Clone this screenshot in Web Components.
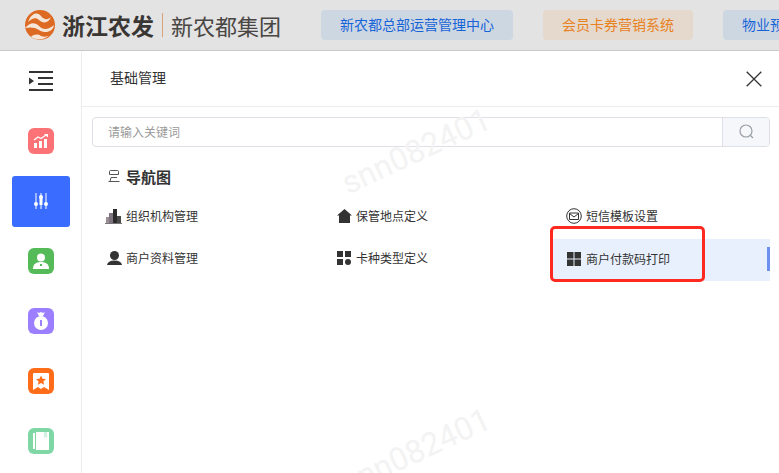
<!DOCTYPE html>
<html lang="zh">
<head>
<meta charset="utf-8">
<title>基础管理</title>
<style>
    html, body {
        margin: 0;
        padding: 0;
        height: 100%;
        background: #fff;
        overflow: hidden;
        font-family: "Liberation Sans", "Noto Sans CJK SC", sans-serif;
    }
</style>
</head>
<body>

<template id="app-shell-template">
    <style>
        :host { display: flex; flex-flow: column; width: 779px; height: 473px; position: relative; overflow: hidden; }
        .body { flex: 1; display: flex; min-height: 0; }
    </style>
    <slot name="header"></slot>
    <div class="body">
        <slot name="side"></slot>
        <slot></slot>
    </div>
    <slot name="overlay"></slot>
</template>

<template id="top-bar-template">
    <style>
        :host { display: flex; align-items: center; height: 50px; flex: none; background: #e3e3e3; border-bottom: 1px solid #c9c9c9; padding-left: 25px; overflow: hidden; box-sizing: content-box; }
        svg { width: 30px; height: 30px; flex: none; }
        .brand { font-size: 23px; font-weight: 700; color: #3a3634; margin-left: 7px; white-space: nowrap; letter-spacing: 0; }
        .rule { width: 1px; height: 24px; background: #d9a27a; margin: 0 8px; flex: none; }
        .sub { font-size: 22px; color: #4a4644; white-space: nowrap; font-weight: 400; }
        .tabs { display: flex; gap: 30px; margin-left: 40px; flex: none; }
    </style>
    <svg viewBox="0 0 30 30">
        <circle cx="15" cy="15" r="15" fill="#dd6a22"/>
        <path d="M3 12C7 2 13 2 16 6c3 4 7 4 10 1-2 6-8 7-12 3-3-3-7-2-11 2z" fill="#f5e6da"/>
        <path d="M0 18c5-6 10-6 14-2 4 4 9 4 15-1-1 7-9 9-15 5-4-3-9-3-14-2z" fill="#f5e6da"/>
        <path d="M6 27c3-3 7-3 10-1 3 1 6 1 8-1-4 5-12 6-18 2z" fill="#f5e6da"/>
    </svg>
    <span class="brand">浙江农发</span>
    <span class="rule"></span>
    <span class="sub">新农都集团</span>
    <div class="tabs"><slot></slot></div>
</template>

<template id="top-tab-template">
    <style>
        :host { display: block; flex: none; height: 30px; line-height: 30px; padding: 0 19px; border-radius: 4px; font-size: 14px; white-space: nowrap; background: #cdd7e2; color: #1764d8; }
        :host(.orange) { background: #e5d8cc; color: #e8821e; }
    </style>
    <slot></slot>
</template>

<template id="side-nav-template">
    <style>
        :host { display: flex; flex-flow: column; width: 81px; flex: none; border-right: 1px solid #ececec; box-sizing: content-box; }
    </style>
    <slot></slot>
</template>

<template id="side-item-template">
    <style>
        :host { display: flex; height: 60px; flex: none; align-items: center; justify-content: center; }
        .tile { width: 26px; height: 26px; border-radius: 6px; background: var(--tile, transparent); display: flex; align-items: center; justify-content: center; }
        :host(.active) .tile { width: 58px; height: 51px; border-radius: 3px; background: #3a6cff; }
        ::slotted(svg) { display: block; }
    </style>
    <div class="tile"><slot></slot></div>
</template>

<template id="work-panel-template">
    <style>
        :host { display: flex; flex-flow: column; flex: 1; min-width: 0; }
        .title { display: flex; align-items: center; justify-content: space-between; height: 56px; flex: none; box-sizing: border-box; border-bottom: 1px solid #ececec; padding: 0 17px 0 28px; font-size: 14px; color: #333; }
        .title span { margin-bottom: 4px; }
        svg { display: block; }
        .content { padding: 10px 9px 0 10px; }
        h3 { margin: 10px 0 0; box-sizing: border-box; display: flex; align-items: center; gap: 6px; height: 40px; padding: 0 0 2px 16px; font-size: 15px; font-weight: 700; color: #333; }
        .grid { display: grid; grid-template-columns: 230px 230px 218px; grid-auto-rows: 42px; }
    </style>
    <div class="title">
        <span>基础管理</span>
        <svg width="16" height="16" viewBox="0 0 16 16"><path d="M.7.7l14.6 14.6M15.3.7L.7 15.3" stroke="#333" stroke-width="1.3" fill="none"/></svg>
    </div>
    <div class="content">
        <slot name="search"></slot>
        <h3>
            <svg width="12" height="12" viewBox="0 0 12 12" fill="none" stroke="#555" stroke-width="1"><path d="M1.500 4.500V1.500Q1.500.5 2.500.5h7q1 0 1 1v3zM3 7.500h6M.5 11.500h11M3 7.500l-1 4"/></svg>
            导航图
        </h3>
        <div class="grid"><slot></slot></div>
    </div>
</template>

<template id="search-box-template">
    <style>
        :host { display: flex; height: 30px; box-sizing: border-box; border: 1px solid #dedfe8; border-radius: 4px; font-size: 12px; color: #9a9a9a; }
        .field { flex: 1; display: flex; align-items: center; padding: 0 0 2px 15px; }
        .btn { width: 46px; flex: none; display: flex; align-items: center; justify-content: center; padding-bottom: 2px; box-sizing: content-box; background: #f5f7fa; border-left: 1px solid #dedfe8; border-radius: 0 3px 3px 0; }
    </style>
    <div class="field"><slot></slot></div>
    <div class="btn">
        <svg width="15" height="15" viewBox="0 0 15 15" fill="none" stroke="#9aa0a8" stroke-width="1.2"><circle cx="7" cy="7" r="6"/><path d="M11.500 11.500l2.500 2.500"/></svg>
    </div>
</template>

<template id="menu-item-template">
    <style>
        :host { display: flex; align-items: center; gap: 4px; position: relative; box-sizing: border-box; padding: 0 0 5px 13px; font-size: 12px; color: #333; white-space: nowrap; }
        :host(.current) { background: #e8f0fd; padding-bottom: 3px; }
        :host(.current)::after { content: ""; position: absolute; right: 0; top: 8px; width: 3px; height: 24px; background: #6d8ff0; }
        ::slotted(svg) { display: block; flex: none; margin-top: 1px; }
    </style>
    <slot name="icon"></slot>
    <slot></slot>
</template>

<template id="water-mark-template">
    <style>
        :host { display: block; position: absolute; left: var(--x); top: var(--y); font-size: 32px; font-family: "Roboto", sans-serif; font-weight: 400; color: #f3f3f3; transform: rotate(-25deg); transform-origin: center; white-space: nowrap; pointer-events: none; line-height: 40px; }
    </style>
    <slot></slot>
</template>

<template id="mark-box-template">
    <style>
        :host { display: block; position: absolute; left: 550px; top: 226px; width: 155px; height: 56px; box-sizing: border-box; border: 3px solid #ff2a1f; border-radius: 5px; pointer-events: none; }
    </style>
</template>

<app-shell>
    <top-bar slot="header">
        <top-tab>新农都总部运营管理中心</top-tab>
        <top-tab class="orange">会员卡券营销系统</top-tab>
        <top-tab>物业预收费管理系统</top-tab>
    </top-bar>

    <side-nav slot="side">
        <side-item>
            <svg width="24" height="20" viewBox="0 0 24 20" fill="#333"><path d="M0 0h24v2H0zM9 6h15v2H9zM9 12h15v2H9zM0 18h24v2H0zM0 6.500l5 3.500-5 3.500z"/></svg>
        </side-item>
        <side-item style="--tile:#fb7376">
            <svg width="16" height="14" viewBox="0 0 16 14" fill="#fff"><path d="M1 9h3v5H1zM6 7h3v7H6zM11 5h3v9h-3z"/><path d="M1 6l4-3 3 1.500 5-3.500" fill="none" stroke="#fff" stroke-width="1.200"/><path d="M11 0h4v3.500z"/></svg>
        </side-item>
        <side-item class="active">
            <svg width="14" height="16" viewBox="0 0 14 16" fill="#fff"><path d="M1.500 0h1v16h-1zM6.500 0h1v16h-1zM11.500 0h1v16h-1z"/><circle cx="2" cy="11" r="2"/><circle cx="7" cy="4" r="2"/><circle cx="12" cy="11" r="2"/><path d="M5.500 4h3v8h-3z"/></svg>
        </side-item>
        <side-item style="--tile:#55bb59">
            <svg width="16" height="16" viewBox="0 0 16 16" fill="#fff"><circle cx="8" cy="4.500" r="4"/><path d="M0 16c0-5 3-7 8-7s8 2 8 7z"/><path d="M7 11h2v2H7z" fill="#55bb59"/></svg>
        </side-item>
        <side-item style="--tile:#9b7fff">
            <svg width="14" height="18" viewBox="0 0 14 18" fill="#fff"><path d="M3 0l2 1 2-1 2 1 2-1-2 4H5z"/><circle cx="7" cy="11" r="7"/><path d="M6 8h2v6H6z" fill="#9b7fff"/></svg>
        </side-item>
        <side-item style="--tile:#ff6d1a">
            <svg width="16" height="17" viewBox="0 0 16 17"><path d="M1 0h14a1 1 0 0 1 1 1v16l-5-3-3 2-3-2-5 3V1a1 1 0 0 1 1-1z" fill="#fff"/><path d="M8 2.500l1.500 3.200 3.500.4-2.600 2.300.7 3.400L8 10l-3.100 1.800.7-3.400L3 6.100l3.500-.4z" fill="#ff6d1a"/></svg>
        </side-item>
        <side-item style="--tile:#7fd7a6">
            <svg width="16" height="18" viewBox="0 0 16 18" fill="#fff"><path d="M0 1h2v16H0zM3 0h13v18H3z"/><path d="M11 0h3v6l-1.500-1L11 6z" fill="#7fd7a6" opacity=".35"/></svg>
        </side-item>
    </side-nav>

    <work-panel>
        <search-box slot="search">请输入关键词</search-box>
        <menu-item>
            <svg slot="icon" width="17" height="16" viewBox="0 0 17 16"><path d="M1 9h4v6H1z" fill="#9b8f96"/><path d="M0 15h17v1H0z" fill="#777"/><path d="M4 5h4v10H4z" fill="#7d7480"/><path d="M8 1h4v14H8z" fill="#2b2b2b"/><path d="M12 8h4v7h-4z" fill="#4a4a4a"/></svg>
            组织机构管理
        </menu-item>
        <menu-item style="padding-left:15px">
            <svg slot="icon" width="15" height="14" viewBox="0 0 15 14" fill="#333"><path d="M7.500 0l7.500 6.500h-2V14H2V6.500H0z"/></svg>
            保管地点定义
        </menu-item>
        <menu-item style="padding-left:14px">
            <svg slot="icon" width="16" height="16" viewBox="0 0 16 16" fill="none" stroke="#333"><circle cx="8" cy="8" r="7.300"/><path d="M3.500 5h9v6.500h-9zM3.500 5.500L8 9l4.500-3.500"/></svg>
            短信模板设置
        </menu-item>
        <menu-item style="padding-left:15px">
            <svg slot="icon" width="15" height="14" viewBox="0 0 15 14" fill="#333"><circle cx="7.500" cy="4.500" r="4.500"/><path d="M0 14c.5-3 3-4.500 7.500-4.500S14.500 11 15 14z"/></svg>
            商户资料管理
        </menu-item>
        <menu-item style="padding-left:15px">
            <svg slot="icon" width="15" height="14" viewBox="0 0 15 14" fill="#333"><path d="M0 0h6v6H0zM8 0h6v6H8zM0 8h6v6H0z"/><circle cx="11" cy="11" r="3"/></svg>
            卡种类型定义
        </menu-item>
        <menu-item class="current" style="padding-left:15px;gap:5px">
            <svg slot="icon" width="14" height="14" viewBox="0 0 14 14" fill="#333"><path d="M0 0h6.500v6.500H0zM7.500 0H14v6.500H7.500zM0 7.500h6.500V14H0zM7.500 7.500H14V14H7.500z"/></svg>
            商户付款码打印
        </menu-item>
    </work-panel>

    <water-mark slot="overlay" style="--x:336px;--y:131px">snn082401</water-mark>
    <water-mark slot="overlay" style="--x:336px;--y:431px">snn082401</water-mark>
    <mark-box slot="overlay"></mark-box>
</app-shell>

<script>
    const define_from_template = (tag, template_id) => {
        customElements.define(
            tag,
            class extends HTMLElement {
                constructor() {
                    super();
                    const template_clone = document.getElementById(template_id).content.cloneNode(true);
                    this.attachShadow({ mode: "open" }).append(template_clone);
                }
            },
        );
    };

    define_from_template("app-shell", "app-shell-template");
    define_from_template("top-bar", "top-bar-template");
    define_from_template("top-tab", "top-tab-template");
    define_from_template("side-nav", "side-nav-template");
    define_from_template("side-item", "side-item-template");
    define_from_template("work-panel", "work-panel-template");
    define_from_template("search-box", "search-box-template");
    define_from_template("menu-item", "menu-item-template");
    define_from_template("water-mark", "water-mark-template");
    define_from_template("mark-box", "mark-box-template");
</script>
</body>
</html>
